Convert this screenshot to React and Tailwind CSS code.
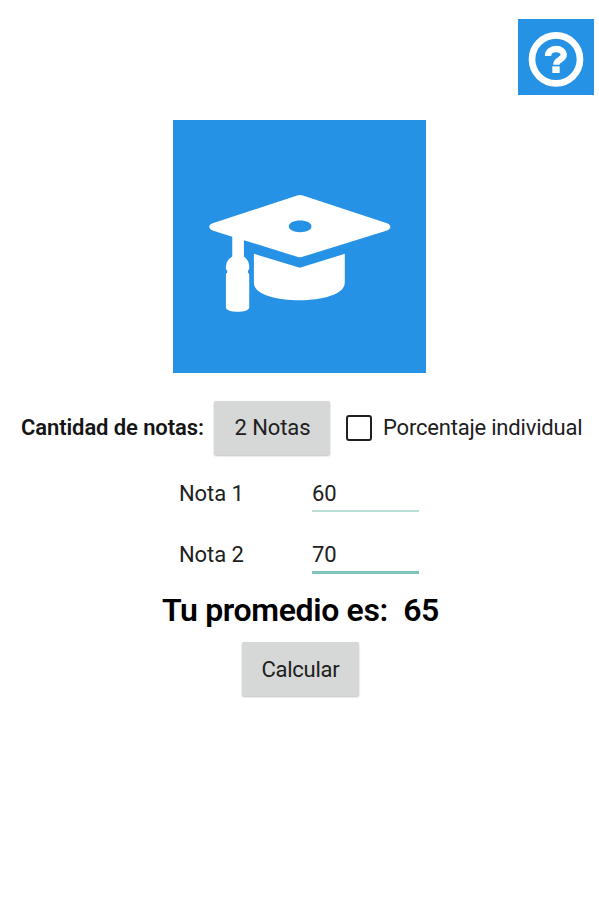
import { useState } from "react";

function HelpIcon() {
  return (
    <svg viewBox="85 57 228 228" className="block h-[76px] w-[76px]" aria-hidden>
      <circle cx="199" cy="178" r="72" fill="none" stroke="white" strokeWidth="20" />
      <path
        d="M175 168C175 155 185 147 199 147C213 147 222 154 222 165C222 179 200 179 200 194"
        fill="none"
        stroke="white"
        strokeWidth="19"
      />
      <rect x="188" y="199" width="22" height="20" fill="white" />
    </svg>
  );
}

function CapIcon() {
  return (
    <svg viewBox="39 29 760 760" className="block h-[253px] w-[253px]" aria-hidden>
      <g fill="white">
        <path
          fillRule="evenodd"
          d="M412 256Q420 253 429 256L682 339Q692 343 692 350Q692 357 682 361L428 440Q420 443 412 440L252 390V439Q267 450 268 468V475Q268 479 264 482V487Q268 490 268 494V592C268 609 198 609 198 592V494Q198 490 202 487V482Q198 479 198 475V468Q199 450 217 439V380L158 361Q148 357 148 350Q148 343 158 339ZM421 331C402 331 387 338 387 348.500C387 359 402 366 421 366C440 366 455 359 455 348.500C455 338 440 331 421 331Z"
        />
        <path d="M282 431L420 473L555 431V518C555 588 282 588 282 518Z" />
      </g>
    </svg>
  );
}

export default function App() {
  const [grades, setGrades] = useState(["60", "70"]);
  const [individual, setIndividual] = useState(false);
  const [average, setAverage] = useState(65);

  const updateGrade = (index, value) => {
    setGrades(grades.map((g, i) => (i === index ? value : g)));
  };

  const calculate = () => {
    const total = grades.reduce((sum, g) => sum + Number(g), 0);
    setAverage(total / grades.length);
  };

  return (
    <div className="min-h-screen w-full bg-white font-[Roboto,sans-serif] text-[22px] leading-[26px] tracking-[-0.1px] text-[#202020]">
      <div className="flex justify-end pt-[19px] pr-[5px]">
        <button className="bg-[#2592e6]" aria-label="Ayuda">
          <HelpIcon />
        </button>
      </div>

      <div className="mt-[25px] flex justify-center">
        <div className="bg-[#2592e6]">
          <CapIcon />
        </div>
      </div>

      <div className="mt-7 flex items-center pl-[21px]">
        <span className="w-[193px] shrink-0 font-semibold whitespace-nowrap text-[#151515]">
          Cantidad de notas:
        </span>
        <button className="h-[54px] w-[116px] shrink-0 rounded-xs bg-[#d6d8d7] pl-px shadow-[0_1px_2px_rgba(0,0,0,0.25)]">
          2 Notas
        </button>
        <label className="ml-4 flex items-center">
          <input
            type="checkbox"
            checked={individual}
            onChange={(e) => setIndividual(e.target.checked)}
            className="h-[26px] w-[26px] shrink-0 appearance-none rounded-[3px] border-[2.5px] border-[#202020] checked:bg-[#009688]"
          />
          <span className="ml-[11px] tracking-[-0.2px] whitespace-nowrap">
            Porcentaje individual
          </span>
        </label>
      </div>

      <div className="mt-[25px] flex flex-col">
        {grades.map((grade, i) => (
          <label key={i} className="flex h-[61px] pl-[179px]">
            <span className="w-[133px] pt-px">Nota {i + 1}</span>
            <input
              value={grade}
              onChange={(e) => updateGrade(i, e.target.value)}
              className={`w-[107px] outline-none ${
                i === 1
                  ? "h-[33px] border-b-3 border-[#80c5bb] pb-1"
                  : "h-8 border-b-2 border-[#b9dcd5] pb-1"
              }`}
            />
          </label>
        ))}
      </div>

      <h1 className="-mt-[11px] pl-0.5 text-center text-[32px] leading-[38px] font-semibold tracking-[-0.35px] whitespace-pre text-black">
        Tu promedio es:  {average}
      </h1>

      <div className="mt-[13px] flex justify-center pl-0.5">
        <button
          onClick={calculate}
          className="h-[54px] w-[117px] rounded-xs bg-[#d6d8d7] pt-0.5 tracking-[-0.25px] shadow-[0_1px_2px_rgba(0,0,0,0.25)]"
        >
          Calcular
        </button>
      </div>
    </div>
  );
}
